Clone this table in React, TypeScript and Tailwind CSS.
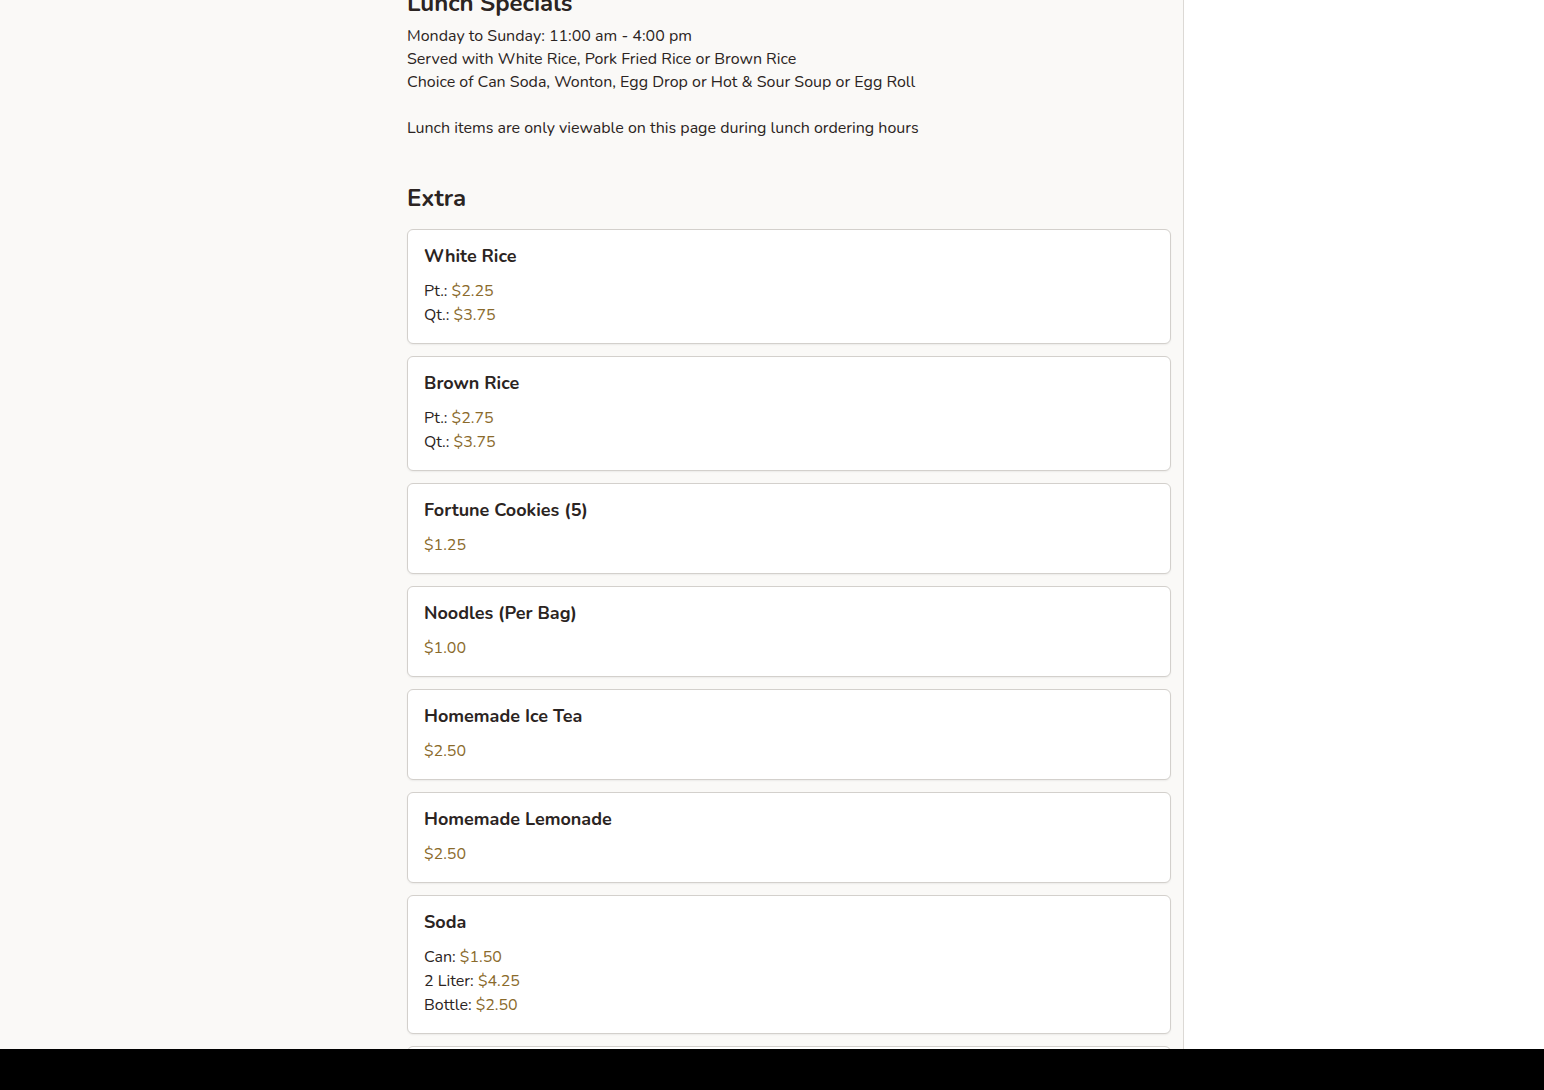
const items = [
  { name: "White Rice", prices: [["Pt.", "$2.25"], ["Qt.", "$3.75"]] },
  { name: "Brown Rice", prices: [["Pt.", "$2.75"], ["Qt.", "$3.75"]] },
  { name: "Fortune Cookies (5)", prices: [["", "$1.25"]] },
  { name: "Noodles (Per Bag)", prices: [["", "$1.00"]] },
  { name: "Homemade Ice Tea", prices: [["", "$2.50"]] },
  { name: "Homemade Lemonade", prices: [["", "$2.50"]] },
  { name: "Soda", prices: [["Can", "$1.50"], ["2 Liter", "$4.25"], ["Bottle", "$2.50"]] },
  { name: "Egg Roll", prices: [["", "$1.75"]] },
];

function MenuCard({ name, prices }: { name: string; prices: string[][] }) {
  return (
    <div className="rounded-md border border-[#d3d0cc] bg-white px-4 pt-[14px] pb-[16px] shadow-[0_1px_2px_rgba(0,0,0,0.06)]">
      <h3 className="text-[18px] font-bold leading-[24px] text-[#2b2422]">{name}</h3>
      <div className="mt-[11px]">
        {prices.map(([label, price]) => (
          <div key={label + price} className="text-[16px] leading-[24px] text-[#2b2422]">
            {label && <span>{label}: </span>}
            <span className="text-[#8a6a2b]">{price}</span>
          </div>
        ))}
      </div>
    </div>
  );
}

export default function App() {
  return (
    <div
      className="flex h-[1090px] flex-col overflow-hidden"
      style={{ fontFamily: '"Nunito", Lato, "Open Sans", sans-serif' }}
    >
      <div className="flex min-h-0 flex-1">
        <main className="w-[1184px] shrink-0 overflow-hidden border-r border-[#dcd9d5] bg-[#faf9f7] pl-[407px] pr-[12px]">
          <div className="mt-[-13px]">
            <h2 className="mb-[6px] text-[24px] font-bold leading-[32px] text-[#2b2422]">Lunch Specials</h2>
            <div className="text-[16px] leading-[23px] text-[#2b2422]">
              <p>Monday to Sunday: 11:00 am - 4:00 pm</p>
              <p>Served with White Rice, Pork Fried Rice or Brown Rice</p>
              <p>Choice of Can Soda, Wonton, Egg Drop or Hot &amp; Sour Soup or Egg Roll</p>
              <p className="h-[23px]" />
              <p>Lunch items are only viewable on this page during lunch ordering hours</p>
            </div>
            <h2 className="mt-[42px] mb-[15px] text-[24px] font-bold leading-[32px] text-[#2b2422]">Extra</h2>
            <div className="flex flex-col gap-3">
              {items.map((it) => (
                <MenuCard key={it.name} name={it.name} prices={it.prices} />
              ))}
            </div>
          </div>
        </main>
        <aside className="flex-1 bg-white" />
      </div>
      <div className="h-[41px] shrink-0 bg-black" />
    </div>
  );
}
